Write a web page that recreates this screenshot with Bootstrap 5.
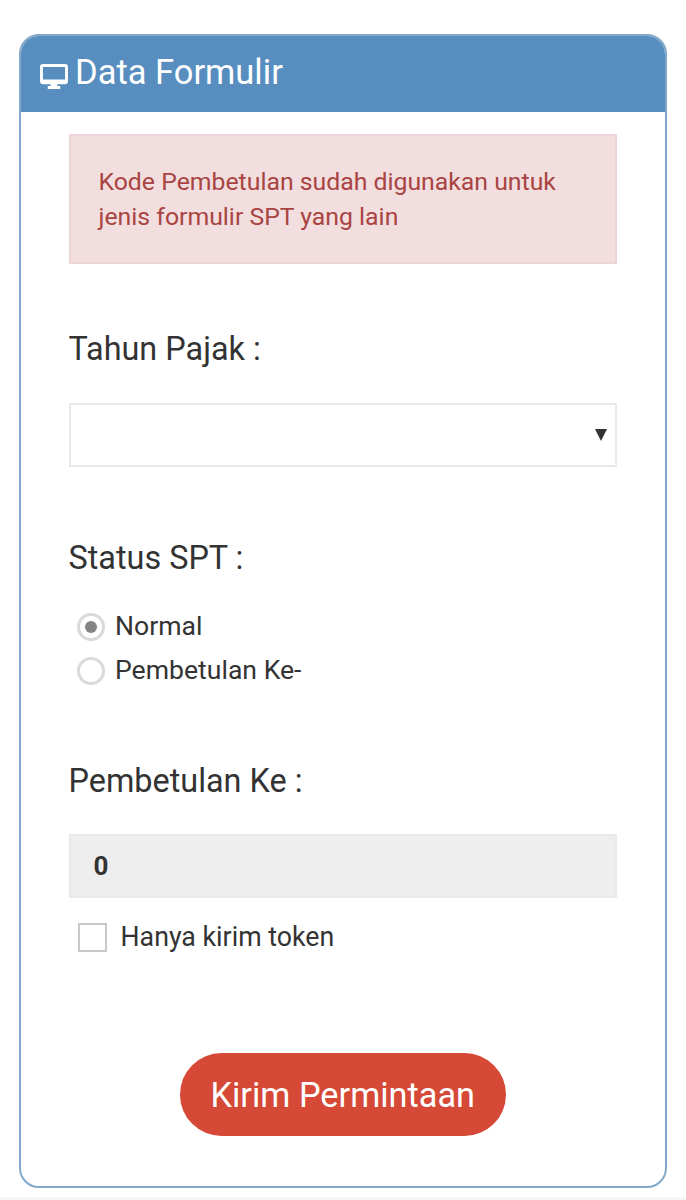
<!DOCTYPE html>
<html lang="id">
<head>
<meta charset="utf-8">
<title>Data Formulir</title>
<link href="https://cdn.jsdelivr.net/npm/bootstrap@5.3.0/dist/css/bootstrap.min.css" rel="stylesheet">
<style>
html, body { height: 1200px; overflow: hidden; }
body { background: #fff; font-family: Roboto, "Liberation Sans", sans-serif; color: #333; }
.page-wrap { padding: 34px 19px 0 19px; height: 1197px; background: #fff; }
.form-panel { height: 1154px; border: 2px solid #82a9c9; border-radius: 20px; background: #fff; overflow: hidden; }
.form-head { height: 77px; margin: -1px -1px 0; background: #578ebf; color: #fff; font-size: 34.5px; line-height: 75px; padding-left: 20px; gap: 7px; }
.form-head svg { width: 28px; height: 25px; margin-top: 5px; }
.form-head span { margin-top: -2px; }
.form-inner { padding: 22px 48px 0 47.5px; }
.warn-box { height: 130px; margin: 0; padding: 28px 28px; border: 2px solid #eed3d7; border-radius: 0; background: #f2dede; color: #a94442; font-size: 24.8px; line-height: 35px; }
.field-label { display: block; margin: 0; font-size: 32.4px; line-height: 40px; color: #333; }
.label-tahun { margin-top: 65px; }
.label-status { margin-top: 71px; }
.label-ke { margin-top: 69px; }
.select-box { margin-top: 34px; height: 64px; border: 2px solid #e9e9e9; background: #fff; }
.select-arrow { width: 0; height: 0; border-left: 6px solid transparent; border-right: 6px solid transparent; border-top: 12px solid #333; margin-right: 8px; }
.radio-list { margin-top: 26px; padding-left: 8.5px; }
.radio-row { height: 44px; gap: 10px; font-size: 26.6px; color: #333; }
.radio-dot { width: 28px; height: 28px; border: 3px solid #dadada; border-radius: 50%; background: #fff; flex: none; margin-top: 2px; }
.radio-dot.on::after { content: ""; display: block; width: 12px; height: 12px; margin: 5px; border-radius: 50%; background: #858585; }
.num-box { margin-top: 33px; height: 64px; border: 2px solid #e9e9e9; background: #eee; padding-left: 23px; font-size: 26px; font-weight: 700; color: #333; }
.check-row { margin-top: 17px; padding-left: 9px; gap: 14px; font-size: 26.75px; line-height: 44px; color: #333; }
.check-box { width: 29px; height: 29px; border: 2px solid #c8c8c8; background: #fff; flex: none; }
.send-row { margin-top: 94px; }
.send-btn { width: 326px; height: 83px; padding: 2px 0 0; border: 0; border-radius: 42px; background: #d64937; color: #fff; font-size: 34.3px; }
.send-btn:hover { background: #d64937; color: #fff; }
.foot-strip { height: 3px; background: #f4f5f6; }
</style>
</head>
<body>
<div class="page-wrap">
  <div class="form-panel">
    <div class="form-head d-flex align-items-center">
      <svg viewBox="0 0 29 26" aria-hidden="true"><path fill="#fff" fill-rule="evenodd" d="M3 0h23a3 3 0 0 1 3 3v15a3 3 0 0 1-3 3H18v2h3v3H8v-3h3v-2H3a3 3 0 0 1-3-3V3a3 3 0 0 1 3-3zm0 3v13h23V3z"/></svg>
      <span>Data Formulir</span>
    </div>
    <div class="form-inner">
      <div class="alert warn-box" role="alert">Kode Pembetulan sudah digunakan untuk jenis formulir SPT yang lain</div>
      <label class="field-label label-tahun">Tahun Pajak :</label>
      <div class="select-box d-flex align-items-center justify-content-end"><span class="select-arrow"></span></div>
      <label class="field-label label-status">Status SPT :</label>
      <div class="radio-list">
        <div class="radio-row d-flex align-items-center"><span class="radio-dot on"></span><span>Normal</span></div>
        <div class="radio-row d-flex align-items-center"><span class="radio-dot"></span><span>Pembetulan Ke-</span></div>
      </div>
      <label class="field-label label-ke">Pembetulan Ke :</label>
      <div class="num-box d-flex align-items-center">0</div>
      <div class="check-row d-flex align-items-center"><span class="check-box"></span><span>Hanya kirim token</span></div>
      <div class="send-row d-flex justify-content-center"><button type="button" class="btn send-btn">Kirim Permintaan</button></div>
    </div>
  </div>
</div>
<div class="foot-strip"></div>
<script src="https://cdn.jsdelivr.net/npm/bootstrap@5.3.0/dist/js/bootstrap.bundle.min.js"></script>
</body>
</html>
